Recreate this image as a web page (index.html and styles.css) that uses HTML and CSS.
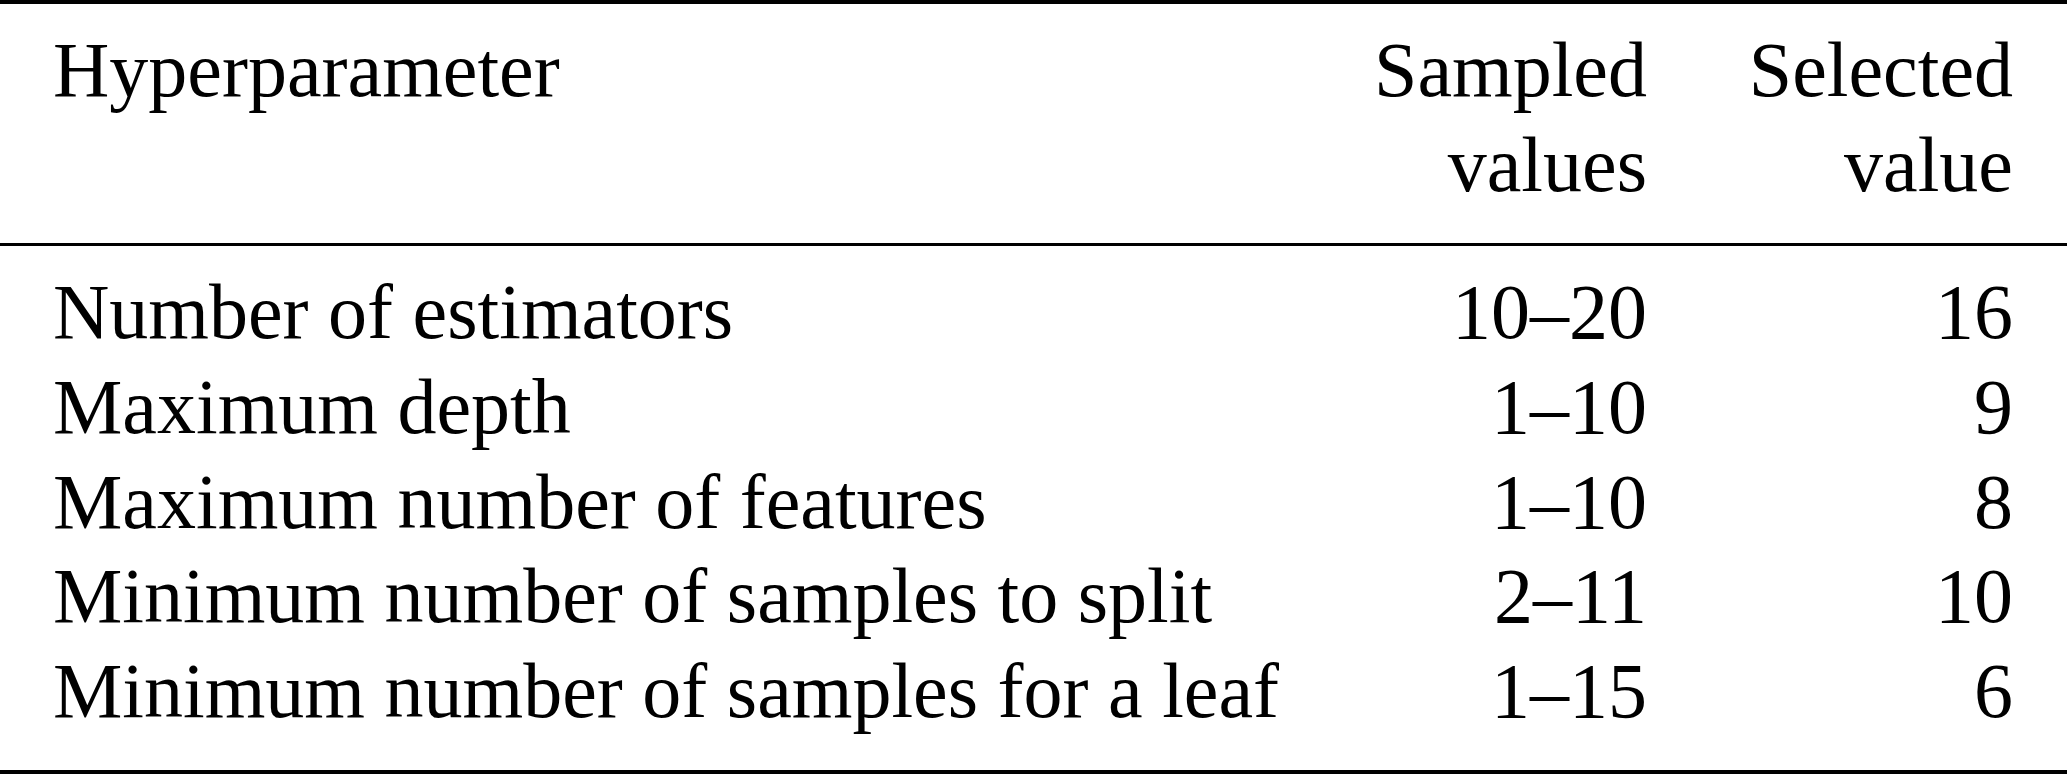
FILE: index.html
```html
<!DOCTYPE html>
<html lang="en">
<head>
<meta charset="utf-8">
<title>Hyperparameters</title>
<link rel="stylesheet" href="styles.css">
</head>
<body>
<table class="params">
  <colgroup>
    <col class="col-name">
    <col class="col-sampled">
    <col class="col-selected">
  </colgroup>
  <thead>
    <tr>
      <th class="name">Hyperparameter</th>
      <th class="num">Sampled<br>values</th>
      <th class="num last">Selected<br>value</th>
    </tr>
  </thead>
  <tbody>
    <tr class="first">
      <td class="name">Number of estimators</td>
      <td class="num">10–20</td>
      <td class="num last">16</td>
    </tr>
    <tr>
      <td class="name">Maximum depth</td>
      <td class="num">1–10</td>
      <td class="num last">9</td>
    </tr>
    <tr>
      <td class="name">Maximum number of features</td>
      <td class="num">1–10</td>
      <td class="num last">8</td>
    </tr>
    <tr>
      <td class="name">Minimum number of samples to split</td>
      <td class="num">2–11</td>
      <td class="num last">10</td>
    </tr>
    <tr class="final">
      <td class="name">Minimum number of samples for a leaf</td>
      <td class="num">1–15</td>
      <td class="num last">6</td>
    </tr>
  </tbody>
</table>
</body>
</html>
```

FILE: styles.css
```css
html, body {
  margin: 0;
  padding: 0;
  background: #ffffff;
}

.params {
  width: 2067px;
  border-collapse: collapse;
  table-layout: fixed;
  font-family: "Liberation Serif", "Times New Roman", serif;
  font-size: 78px;
  line-height: 94.75px;
  color: #000000;
  border-top: 4px solid #000000;
  border-bottom: 4px solid #000000;
}

.col-name { width: 1300px; }
.col-sampled { width: 347px; }
.col-selected { width: 420px; }

.params th,
.params td {
  padding: 0;
  font-weight: normal;
  white-space: nowrap;
  vertical-align: top;
}

.params thead th {
  line-height: 94.5px;
  padding-top: 19px;
  padding-bottom: 31px;
  border-bottom: 3px solid #000000;
}

.params .name {
  text-align: left;
  padding-left: 53px;
}

.params .num {
  text-align: right;
}

.params .last {
  padding-right: 54px;
}

.params tr.first td {
  padding-top: 19px;
}

.params tr.final td {
  padding-bottom: 31px;
}
```
